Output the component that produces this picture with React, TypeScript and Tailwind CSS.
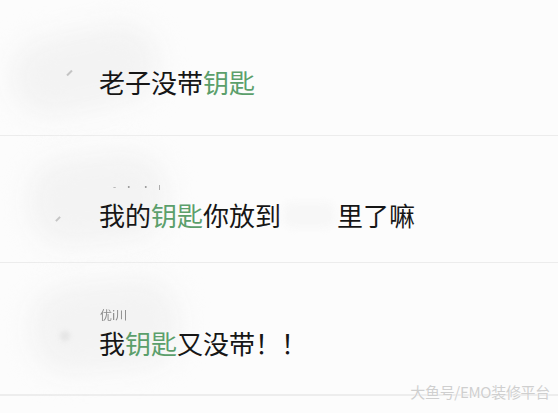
const cjk = { fontFamily: '"Noto Sans CJK SC", "Noto Sans", sans-serif' };

function Key() {
  return <span className="text-[#5b9f6b]">钥匙</span>;
}

export default function App() {
  return (
    <div style={cjk} className="flex h-[413px] w-[558px] flex-col overflow-hidden bg-[#fcfcfc] text-[#161616]">
      {/* row 1 */}
      <div className="flex h-[135px] shrink-0">
        <div className="w-[99px] shrink-0 pt-[30px]">
          <div className="ml-[10px] h-[80px] w-[150px] -rotate-12 rounded-[40px] bg-[#f3f3f3] blur-[14px]" />
          <div className="-mt-[38px] ml-[66px] h-[2px] w-[7px] -rotate-45 bg-[#c4c4c4] blur-[0.5px]" />
        </div>
        <div className="relative flex-1 pt-[69px] text-[26px] leading-[26px]">
          老子没带<Key />
        </div>
      </div>
      <div className="h-px shrink-0 bg-[#ececec]" />
      {/* row 2 */}
      <div className="flex h-[126px] shrink-0">
        <div className="w-[99px] shrink-0 pt-[18px]">
          <div className="ml-[28px] h-[90px] w-[140px] -rotate-6 rounded-[40px] bg-[#f3f3f3] blur-[14px]" />
          <div className="-mt-[26px] ml-[55px] h-[2px] w-[6px] -rotate-45 bg-[#c4c4c4] blur-[0.5px]" />
        </div>
        <div className="relative flex flex-1 flex-col pt-[48px]">
          <div className="ml-[14px] h-[6px] text-[9px] leading-[6px] tracking-[3px] text-[#9a9a9a] blur-[0.6px]">- · · ı</div>
          <div className="mt-[12px] flex text-[26px] leading-[26px]">
            我的<Key />你放到
            <span className="mx-[2px] w-[52px] rounded-[10px] bg-[#f7f7f7] blur-[3px]" />
            里了嘛
          </div>
        </div>
      </div>
      <div className="h-px shrink-0 bg-[#ececec]" />
      {/* row 3 */}
      <div className="flex h-[131px] shrink-0">
        <div className="w-[99px] shrink-0 pt-[18px]">
          <div className="ml-[30px] h-[90px] w-[150px] -rotate-6 rounded-[40px] bg-[#f3f3f3] blur-[14px]" />
          <div className="-mt-[40px] ml-[60px] h-[10px] w-[10px] -rotate-45 rounded-sm bg-[#e6e6e6] blur-[2px]" />
        </div>
        <div className="relative flex flex-1 flex-col pt-[46px]">
          <div className="ml-[1px] text-[12px] leading-[12px] text-[#8a8a8a] blur-[0.6px]">优i川</div>
          <div className="mt-[9px] text-[26px] leading-[26px]">
            我<Key />又没带！！
          </div>
        </div>
      </div>
      <div className="h-[2px] shrink-0 bg-[#ededed]" />
      {/* watermark */}
      <div className="relative -mt-[12px] flex justify-end pr-[8px]">
        <span
          className="text-[15px] leading-[16px] tracking-[-0.3px] text-[#cfcfcf]"
          style={{ ...cjk, textShadow: '0 0 1px #fff, 0 0 1px #fff' }}>
          大鱼号/EMO装修平台
        </span>
      </div>
    </div>
  );
}
